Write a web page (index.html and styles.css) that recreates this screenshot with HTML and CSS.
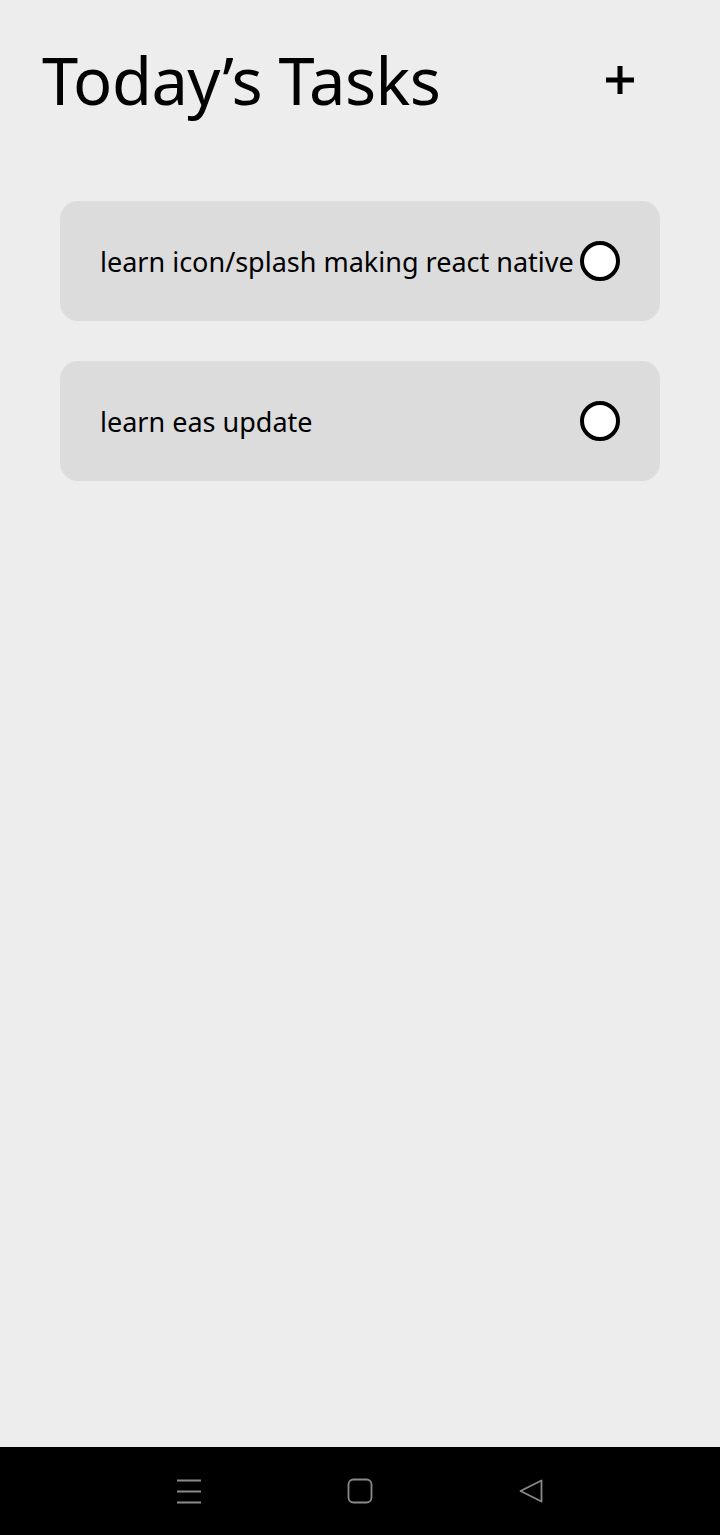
FILE: index.html
```html
<!DOCTYPE html>
<html>
<head>
<meta charset="utf-8">
<link rel="stylesheet" href="styles.css">
</head>
<body>
<div class="screen">
  <header class="header">
    <h1 class="title">Today’s Tasks</h1>
    <button class="add" aria-label="Add task">
      <svg width="28" height="28" viewBox="0 0 28 28"><path d="M14 0v28M0 14h28" stroke="#000" stroke-width="5" fill="none"/></svg>
    </button>
  </header>
  <main class="list">
    <div class="card"><span class="task">learn icon/splash making react native</span><span class="check"></span></div>
    <div class="card"><span class="task">learn eas update</span><span class="check"></span></div>
  </main>
  <nav class="navbar">
    <svg width="26" height="26" viewBox="0 0 26 26"><path d="M1 2.5h24M1 13.5h24M1 24.5h24" stroke="#8a8a8a" stroke-width="1.8" fill="none"/></svg>
    <svg width="26" height="26" viewBox="0 0 26 26"><rect x="1.5" y="1.5" width="23" height="23" rx="5" stroke="#8a8a8a" stroke-width="1.8" fill="none"/></svg>
    <svg width="26" height="26" viewBox="0 0 26 26"><path d="M23.5 2.5v21L2.5 13z" stroke="#8a8a8a" stroke-width="1.8" stroke-linejoin="round" fill="none"/></svg>
  </nav>
</div>
</body>
</html>
```
FILE: styles.css
```css
html, body { margin: 0; padding: 0; }
body { background: #ededed; font-family: "Noto Sans", sans-serif; color: #000; }
.screen { height: 1535px; display: flex; flex-direction: column; }
.header { display: flex; align-items: center; justify-content: space-between; padding: 38px 86px 0 42px; height: 84px; }
.title { margin: 0; font-weight: 400; font-size: 65px; line-height: 80px; letter-spacing: -0.5px; }
.add { background: none; border: 0; padding: 0; width: 28px; height: 28px; display: flex; }
.list { flex: 1; display: flex; flex-direction: column; gap: 40px; padding: 79px 60px 0; }
.card { height: 120px; background: #dcdcdc; border-radius: 18px; display: flex; align-items: center; justify-content: space-between; padding: 0 40px; box-sizing: border-box; }
.task { font-size: 27px; }
.check { width: 40px; height: 40px; box-sizing: border-box; border: 4px solid #000; border-radius: 50%; background: #fff; flex-shrink: 0; }
.navbar { height: 88px; background: #000; display: flex; align-items: center; justify-content: space-between; padding: 0 176px; box-sizing: border-box; }
```
